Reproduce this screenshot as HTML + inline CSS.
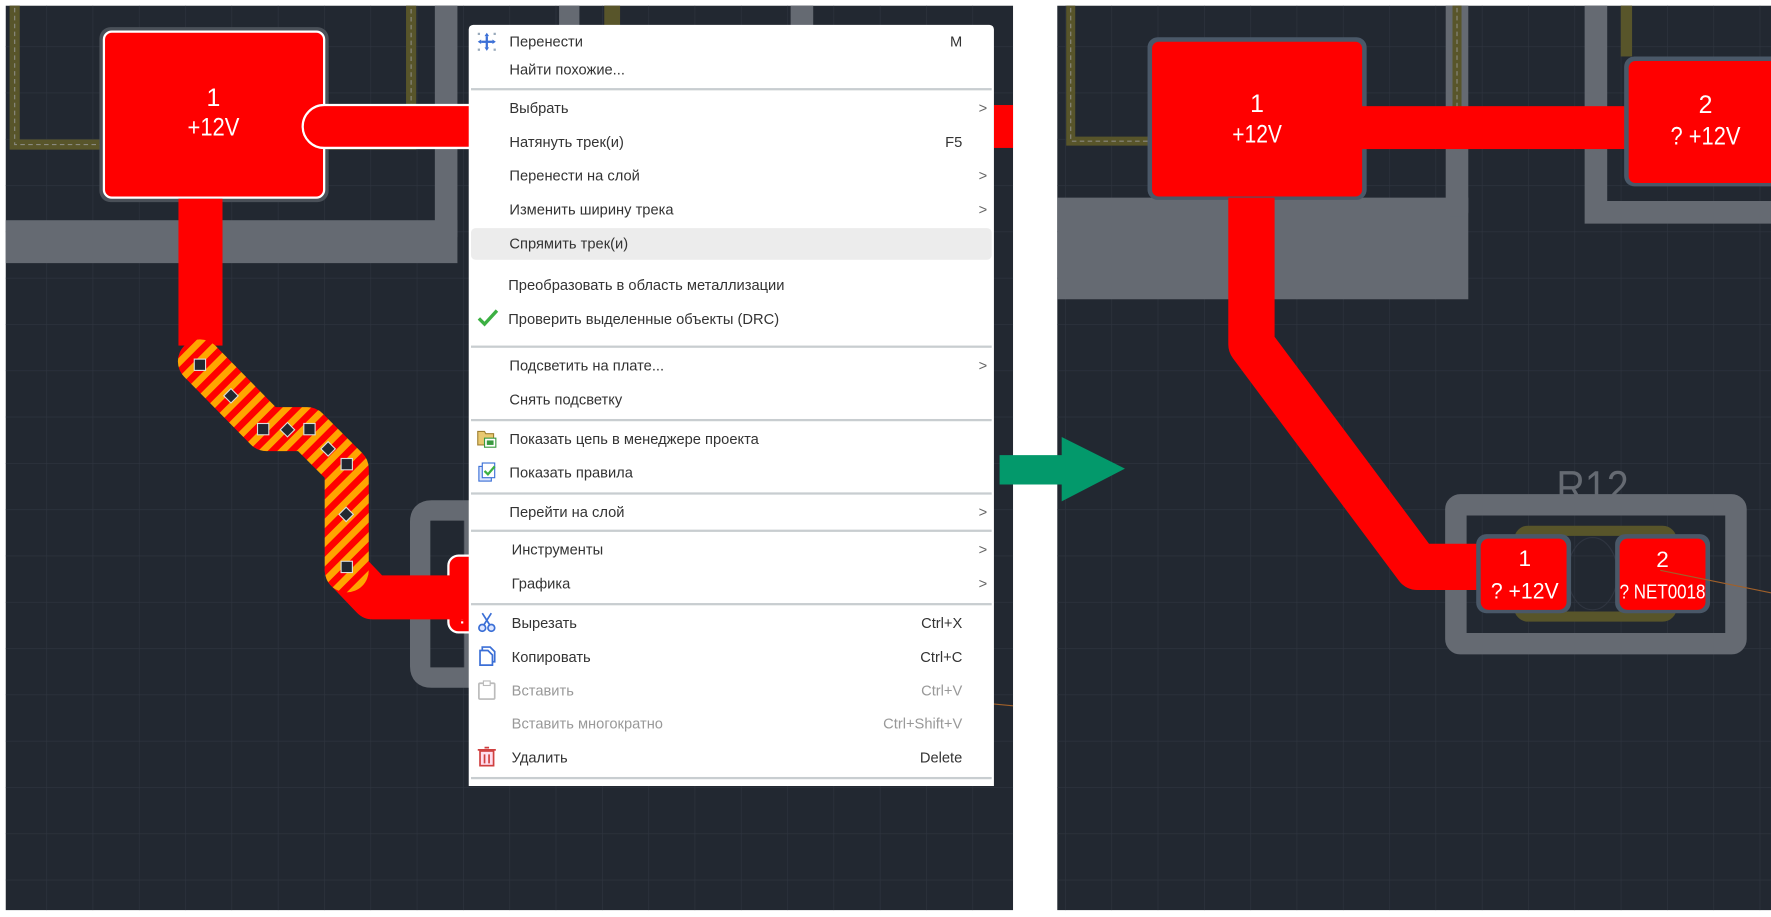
<!DOCTYPE html>
<html><head><meta charset="utf-8"><style>
html,body{margin:0;padding:0;background:#fff;width:1771px;height:917px;overflow:hidden}
#w{position:absolute;left:0;top:0;width:1568px;height:812px;transform:scale(1.12946,1.1293);transform-origin:0 0}
.menu{position:absolute;left:415px;top:22px;width:465px;height:674px;background:#fff;border-radius:4px 4px 0 0;font-family:"Liberation Sans","Noto Sans CJK SC",sans-serif;font-size:13px;color:#333}
.it{position:absolute;left:36px;right:28px;height:20px;line-height:20px;white-space:nowrap}
.it .k{position:absolute;right:0;top:0}
.it .a{position:absolute;right:-22px;top:0;color:#666}
.dis{color:#999}
.sep{position:absolute;left:2px;right:2px;height:2px;background:#c8cdd0}
.hl{position:absolute;left:2px;right:2px;top:180px;height:28px;background:#ececec;border-radius:4px}
.ic{position:absolute;left:7px;width:18px;height:18px}
</style></head><body><div id="w">
<svg width="1568" height="812" style="position:absolute;left:0;top:0" font-family="Liberation Sans, sans-serif">
<defs>
<pattern id="g" width="41" height="41" patternUnits="userSpaceOnUse"><path d="M0 0H41M0 0V41" stroke="#2f3540" stroke-width="1" fill="none"/></pattern>
<pattern id="h" width="12" height="12" patternUnits="userSpaceOnUse" patternTransform="rotate(45)"><rect width="12" height="12" fill="#ff0000"/><rect width="6" height="12" fill="#ffa500"/></pattern>
<clipPath id="cl"><rect x="5" y="5" width="892" height="801"/></clipPath>
<clipPath id="cr"><rect x="936" y="5" width="632" height="801"/></clipPath>
</defs>
<g clip-path="url(#cl)">
<rect x="5" y="5" width="892" height="801" fill="#222831"/>
<rect x="5" y="5" width="892" height="801" fill="url(#g)"/>
<rect x="5" y="195" width="400" height="38" fill="#656a72"/>
<rect x="385" y="0" width="20" height="210" fill="#656a72"/>
<rect x="495" y="0" width="18" height="25" fill="#656a72"/>
<rect x="700" y="0" width="20" height="25" fill="#656a72"/>
<rect x="535" y="0" width="14" height="25" fill="#58552a"/>
<path d="M13 0V128H364V0" stroke="#58552a" stroke-width="9" fill="none"/>
<path d="M13 0V128H364V0" stroke="#8a8a80" stroke-width="1" stroke-dasharray="4 3" fill="none"/>
<rect x="88" y="24" width="203" height="155" rx="10" fill="#4a5058"/>
<rect x="92" y="28" width="195" height="147" rx="7" fill="#ff0000" stroke="#fff" stroke-width="2"/>
<text x="189" y="94" fill="#fff" font-size="22" text-anchor="middle">1</text>
<text x="189" y="120" fill="#fff" font-size="22" text-anchor="middle" textLength="46" lengthAdjust="spacingAndGlyphs">+12V</text>
<path d="M287 93H420V131H287A19 19 0 0 1 287 93Z" fill="#ff0000" stroke="#fff" stroke-width="2"/>
<rect x="880" y="93" width="17" height="38" fill="#ff0000"/>
<rect x="158" y="176" width="39" height="130" fill="#ff0000"/>
<path d="M372 462Q372 452 382 452H420V600H382Q372 600 372 590Z" fill="none" stroke="#656a72" stroke-width="18"/>
<rect x="397" y="492" width="30" height="68" rx="9" fill="#ff0000" stroke="#fff" stroke-width="2"/>
<text x="404" y="552" fill="#fff" font-size="20">?</text>
<path d="M307 505L330 529H420" stroke="#ff0000" stroke-width="39" fill="none" stroke-linejoin="round" stroke-linecap="round"/>
<path d="M177 320L236 380H272L307 415V505" stroke="url(#h)" stroke-width="39" fill="none" stroke-linejoin="round" stroke-linecap="round"/>
<g fill="#222831" stroke="#ddd" stroke-width="1">
<rect x="172" y="318" width="10" height="10"/>
<rect x="200" y="346" width="9" height="9" transform="rotate(45 204.5 350.5)"/>
<rect x="228" y="375" width="10" height="10"/>
<rect x="250" y="376" width="9" height="9" transform="rotate(45 254.5 380.5)"/>
<rect x="269" y="375" width="10" height="10"/>
<rect x="286" y="393" width="9" height="9" transform="rotate(45 290.5 397.5)"/>
<rect x="302" y="406" width="10" height="10"/>
<rect x="302" y="451" width="9" height="9" transform="rotate(45 306.5 455.5)"/>
<rect x="302" y="497" width="10" height="10"/>
</g>
<path d="M790 615L897 625" stroke="#a0602a" stroke-width="1"/>
</g>
<g clip-path="url(#cr)">
<rect x="936" y="5" width="632" height="801" fill="#222831"/>
<rect x="936" y="5" width="632" height="801" fill="url(#g)"/>
<rect x="936" y="175" width="364" height="90" fill="#656a72"/>
<rect x="1280" y="0" width="20" height="192" rx="4" fill="#656a72"/>
<path d="M1413 0V188H1570" stroke="#656a72" stroke-width="20" fill="none"/>
<path d="M948 0V125H1290V0" stroke="#58552a" stroke-width="8" fill="none"/>
<path d="M948 0V125H1290V0" stroke="#8a8a80" stroke-width="1" stroke-dasharray="4 3" fill="none"/>
<rect x="1435" y="0" width="10" height="50" fill="#58552a"/>
<rect x="1016" y="33" width="194" height="144" rx="9" fill="#4a5868"/>
<rect x="1020" y="37" width="186" height="137" rx="6" fill="#ff0000"/>
<rect x="1205" y="94" width="240" height="38" fill="#ff0000"/>
<rect x="1438" y="50" width="140" height="115" rx="9" fill="#4a5868"/>
<rect x="1442" y="54" width="140" height="108" rx="6" fill="#ff0000"/>
<text x="1113" y="99" fill="#fff" font-size="22" text-anchor="middle">1</text>
<text x="1113" y="126" fill="#fff" font-size="22" text-anchor="middle" textLength="44" lengthAdjust="spacingAndGlyphs">+12V</text>
<text x="1510" y="100" fill="#fff" font-size="22" text-anchor="middle">2</text>
<text x="1510" y="128" fill="#fff" font-size="22" text-anchor="middle" textLength="62" lengthAdjust="spacingAndGlyphs">? +12V</text>
<text x="1410" y="445" fill="#656a72" font-size="40" text-anchor="middle" textLength="64" lengthAdjust="spacingAndGlyphs">R12</text>
<rect x="1289" y="447" width="248" height="123" rx="4" fill="none" stroke="#656a72" stroke-width="19"/>
<rect x="1345" y="470" width="135" height="76" rx="8" fill="none" stroke="#58552a" stroke-width="9"/>
<ellipse cx="1410" cy="508" rx="22" ry="32" fill="none" stroke="#2f3540"/>
<path d="M1108 175V305L1255 502H1320" stroke="#ff0000" stroke-width="41" fill="none" stroke-linejoin="round"/>
<rect x="1307" y="473" width="84" height="70" rx="9" fill="#4a5868"/>
<rect x="1311" y="477" width="76" height="63" rx="7" fill="#ff0000"/>
<rect x="1430" y="473" width="84" height="70" rx="9" fill="#4a5868"/>
<rect x="1434" y="477" width="76" height="63" rx="7" fill="#ff0000"/>
<text x="1350" y="501" fill="#fff" font-size="20" text-anchor="middle">1</text>
<text x="1350" y="530" fill="#fff" font-size="20" text-anchor="middle" textLength="60" lengthAdjust="spacingAndGlyphs">? +12V</text>
<text x="1472" y="502" fill="#fff" font-size="20" text-anchor="middle">2</text>
<text x="1472" y="530" fill="#fff" font-size="18" text-anchor="middle" textLength="76" lengthAdjust="spacingAndGlyphs">? NET0018</text>
<path d="M1470 505L1568 525" stroke="#a0602a" stroke-width="1"/>
</g>
<path d="M885 403H940V387L996 415L940 444V429H885Z" fill="#03996b"/>
</svg>

<div class="menu">
<svg class="ic" style="top:6px" viewBox="0 0 18 18"><g fill="#3b6fd6"><path d="M9 1L11 4H7Z M9 17L11 14H7Z M1 9L4 7V11Z M17 9L14 7V11Z"/><rect x="8" y="4" width="2" height="10"/><rect x="4" y="8" width="10" height="2"/></g><g fill="#9ab" ><rect x="1" y="1" width="2" height="2"/><rect x="15" y="1" width="2" height="2"/><rect x="1" y="15" width="2" height="2"/><rect x="15" y="15" width="2" height="2"/></g></svg>
<div class="it" style="top:5px">Перенести<span class="k">M</span></div>
<div class="it" style="top:30px">Найти похожие...</div>
<div class="sep" style="top:56px"></div>
<div class="it" style="top:64px">Выбрать<span class="a">&gt;</span></div>
<div class="it" style="top:94px">Натянуть трек(и)<span class="k">F5</span></div>
<div class="it" style="top:124px">Перенести на слой<span class="a">&gt;</span></div>
<div class="it" style="top:154px">Изменить ширину трека<span class="a">&gt;</span></div>
<div class="hl"></div>
<div class="it" style="top:184px">Спрямить трек(и)</div>
<div class="it" style="top:221px;left:35px">Преобразовать в область металлизации</div>
<svg class="ic" style="top:250px;width:20px" viewBox="0 0 20 18"><path d="M2 10L7 15L18 3" stroke="#3cb043" stroke-width="3" fill="none"/></svg>
<div class="it" style="top:251px;left:35px">Проверить выделенные объекты (DRC)</div>
<div class="sep" style="top:284px"></div>
<div class="it" style="top:292px">Подсветить на плате...<span class="a">&gt;</span></div>
<div class="it" style="top:322px">Снять подсветку</div>
<div class="sep" style="top:349px"></div>
<svg class="ic" style="top:357px" viewBox="0 0 18 18"><path d="M1 3H7L8 5H15V15H1Z" fill="#e8c870" stroke="#a08030"/><rect x="7" y="9" width="10" height="8" fill="#fff" stroke="#3a9a40"/><rect x="9" y="11" width="6" height="4" fill="#3a9a40"/></svg>
<div class="it" style="top:357px">Показать цепь в менеджере проекта</div>
<svg class="ic" style="top:387px" viewBox="0 0 18 18"><rect x="2" y="4" width="11" height="13" fill="#dde6ff" stroke="#3b6fd6"/><rect x="5" y="1" width="11" height="13" fill="#fff" stroke="#3b6fd6"/><path d="M7 8L10 11L16 4" stroke="#3cb043" stroke-width="2" fill="none"/></svg>
<div class="it" style="top:387px">Показать правила</div>
<div class="sep" style="top:414px"></div>
<div class="it" style="top:422px">Перейти на слой<span class="a">&gt;</span></div>
<div class="sep" style="top:447px"></div>
<div class="it" style="top:455px;left:38px">Инструменты<span class="a">&gt;</span></div>
<div class="it" style="top:485px;left:38px">Графика<span class="a">&gt;</span></div>
<div class="sep" style="top:512px"></div>
<svg class="ic" style="top:520px" viewBox="0 0 18 18"><g stroke="#3b6fd6" stroke-width="1.5" fill="#dde6ff"><path d="M5 1L12 12M13 1L6 12" fill="none"/><circle cx="5" cy="14" r="3"/><circle cx="13" cy="14" r="3"/></g></svg>
<div class="it" style="top:520px;left:38px">Вырезать<span class="k">Ctrl+X</span></div>
<svg class="ic" style="top:550px" viewBox="0 0 18 18"><path d="M3 4H10L14 8V17H3Z" fill="#fff" stroke="#3b6fd6" stroke-width="1.5"/><path d="M5 4V1H12L16 5V14H14" fill="none" stroke="#3b6fd6" stroke-width="1.5"/></svg>
<div class="it" style="top:550px;left:38px">Копировать<span class="k">Ctrl+C</span></div>
<svg class="ic" style="top:580px" viewBox="0 0 18 18"><rect x="2" y="3" width="14" height="14" rx="1" fill="none" stroke="#bbb" stroke-width="1.5"/><rect x="6" y="1" width="6" height="4" fill="#fff" stroke="#bbb"/></svg>
<div class="it dis" style="top:580px;left:38px">Вставить<span class="k">Ctrl+V</span></div>
<div class="it dis" style="top:609px;left:38px">Вставить многократно<span class="k">Ctrl+Shift+V</span></div>
<svg class="ic" style="top:639px" viewBox="0 0 18 18"><g stroke="#d04040" stroke-width="1.5" fill="#fde"><rect x="3" y="4" width="12" height="13"/><path d="M1 3H17M7 1H11" fill="none"/><path d="M7 7V15M11 7V15" fill="none"/></g></svg>
<div class="it" style="top:639px;left:38px">Удалить<span class="k">Delete</span></div>
<div class="sep" style="top:666px"></div>
</div>
</div></body></html>
